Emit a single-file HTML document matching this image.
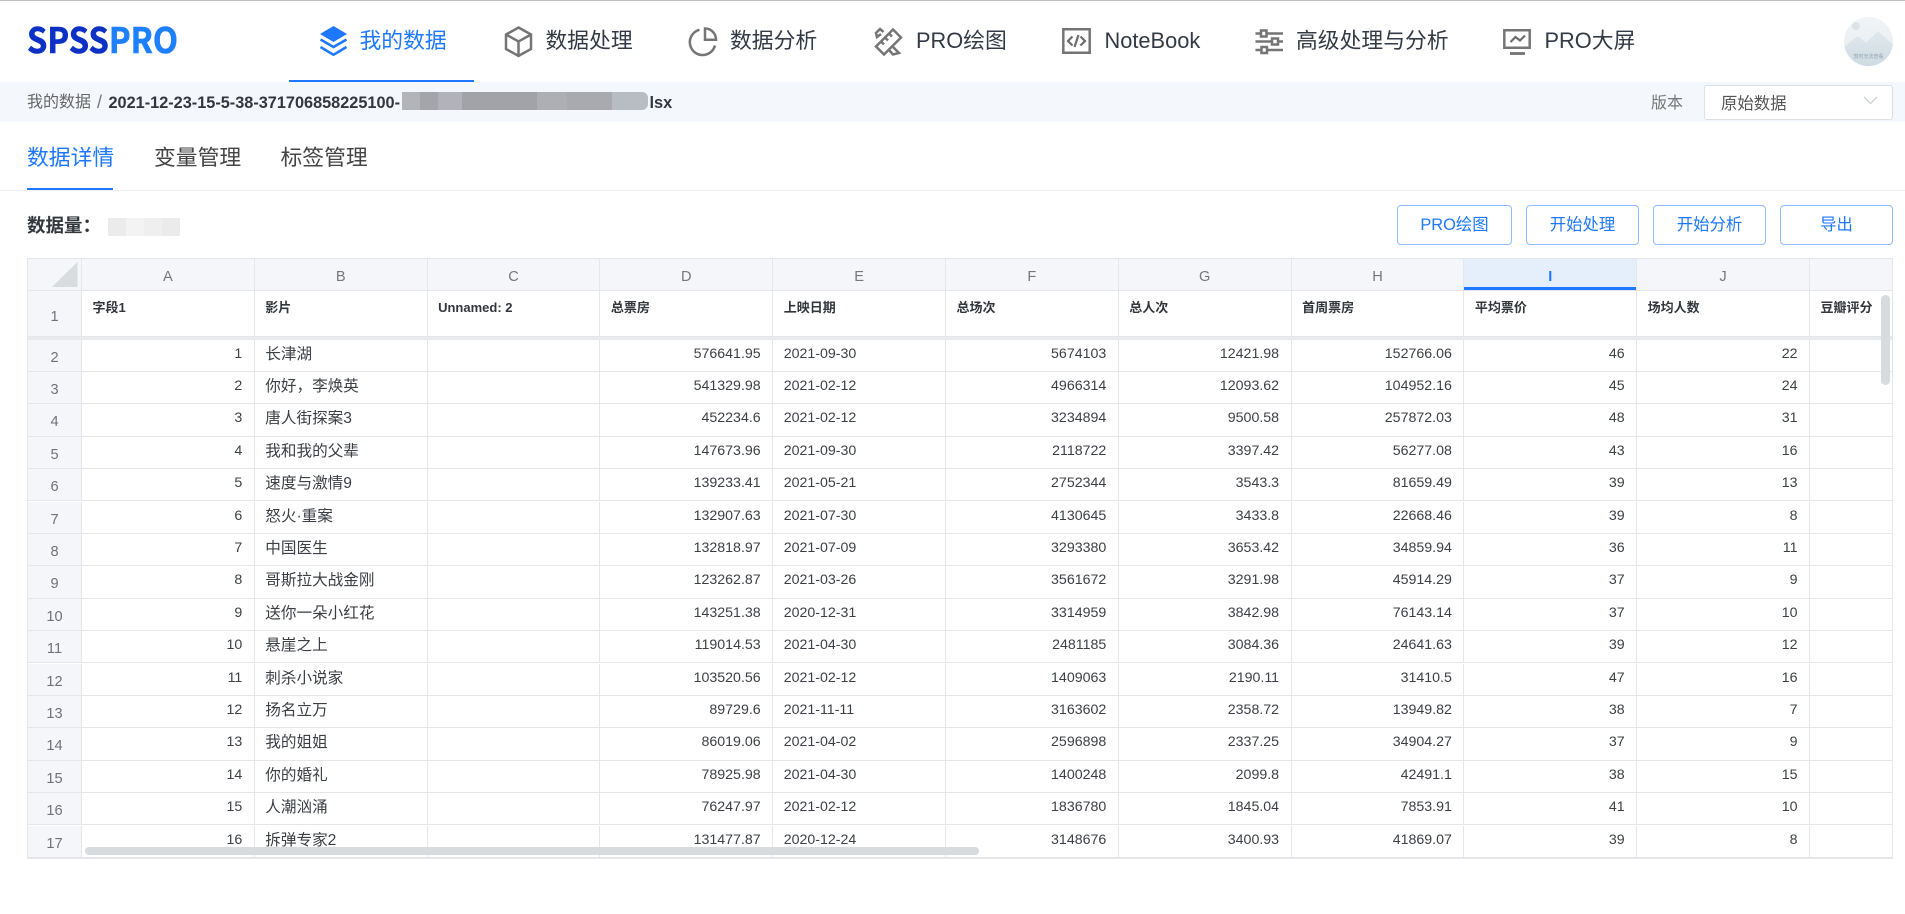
<!DOCTYPE html>
<html lang="zh-CN">
<head>
<meta charset="utf-8">
<title>SPSSPRO 数据详情</title>
<style>
html,body{margin:0;padding:0;background:#fff}
body{width:1905px;height:914px;overflow:hidden;position:relative;font-family:"Liberation Sans","Noto Sans CJK SC",sans-serif;color:#333}
.a{position:absolute;white-space:nowrap}
.nav{font-size:21.8px;line-height:30px;top:26px;color:#333a45}
svg{position:absolute;left:0;top:0;overflow:visible}
.ic{fill:none;stroke:#757575;stroke-width:2.5}
.tab{font-size:21.8px;line-height:30px;top:143px;color:#444}
.btn{position:absolute;top:205px;height:38px;line-height:39px;text-align:center;border:1px solid #8fbcff;border-radius:4px;color:#1e78ff;font-size:16.4px;box-sizing:content-box}
#grid{position:absolute;left:27px;top:258px;width:1866px;height:599px;overflow:hidden;background:#fff}
.r{position:absolute;left:0;display:flex;height:32.4px;width:1866px}
.h,.c{box-sizing:border-box;border-right:1px solid #e4e6ea;border-bottom:1px solid #e4e6ea;flex:none;white-space:nowrap;overflow:hidden}
.h{width:55px;background:#f5f6fa;color:#6f7277;text-align:center;font-size:14.6px;line-height:37px;border-left:1px solid #e4e6ea}
.c{width:172.8px;padding:0 11.5px 0 10.5px;font-size:14.2px;line-height:29.5px;color:#3c4046}
.k{width:84.2px;border-right:none}
.n{text-align:right}
.t{font-size:15.6px}
.col .h,.col .c{background:#f5f6fa;color:#777;text-align:center;line-height:37px;font-size:14.6px;padding:0}
.col .k{width:84.2px}
.hd{height:46px}
.hd .c{font-size:13px;font-weight:700;line-height:34px;color:#33373c}
.hd .h{line-height:52px}
</style>
</head>
<body>
<div class="a" style="left:0;top:0;width:1905px;height:1px;background:#bfbfbf"></div>

<!-- logo -->
<svg width="1905" height="82">
<text x="27" y="53" font-family="Noto Sans CJK SC" font-weight="700" font-size="35" textLength="151" lengthAdjust="spacingAndGlyphs" stroke-width="0.6"><tspan fill="#0c31c4" stroke="#0c31c4">SPSS</tspan><tspan fill="#1e80ff" stroke="#1e80ff">PRO</tspan></text>
<!-- layers -->
<path d="M333.5 26 347 34 333.5 42 320 34Z" fill="#1e78ff"/>
<path d="M320.5 39.5 333.5 47 346.5 39.5M320.5 47 333.5 54.8 346.5 47" fill="none" stroke="#1e78ff" stroke-width="2.5"/>
<!-- cube -->
<path class="ic" d="M518.5 27.5 531 34.5V49L518.5 56 506 49V34.5ZM506 34.5 518.5 41.5 531 34.5M518.5 41.5V56" stroke-width="2.7"/>
<!-- pie -->
<path class="ic" d="M699.5 29.8A12.8 12.8 0 1 0 715 45.5M705 28.5A11 11 0 0 1 716 39.8H705Z" stroke-width="2.6"/>
<!-- ruler/pencil -->
<path class="ic" d="M876 46.5 893 29.5 901 37.5 884 54.5ZM881 41.5 884 44.5M885 37.5 888 40.5M889 33.5 892 36.5M881 34 877 37 876 33 880 29 883.5 32M892 46 899 53 893 54.5 889 50" stroke-width="2.6"/>
<!-- notebook -->
<path class="ic" d="M1063.3 29.3H1089.7V52.7H1063.3Z" stroke-width="2.8"/>
<path d="M1072.5 36.5 1068 41l4.5 4.5M1078.5 35 1074.5 47M1080.5 36.5 1085 41 1080.5 45.5" fill="none" stroke="#6d6d6d" stroke-width="2.2"/>
<!-- sliders -->
<path class="ic" d="M1255.5 33.5H1261M1266.5 33.5H1283M1255.5 41.5H1272M1278 41.5H1283M1255.5 50H1261.5M1267 50H1283" stroke-width="2.5"/>
<path class="ic" d="M1261 30.5H1266.5V36.5H1261ZM1272 38.5H1278V44.5H1272ZM1261.5 47H1267V53H1261.5Z" stroke-width="2.2"/>
<!-- screen -->
<path class="ic" d="M1504.3 30.3H1529.7V47.7H1504.3Z" stroke-width="2.8"/>
<path d="M1510.5 42 1515.5 37 1520 40.5 1525 35.5" fill="none" stroke="#6d6d6d" stroke-width="2.2"/>
<path d="M1510 53.5H1525" stroke="#757575" stroke-width="2.8"/>
<!-- avatar -->
<defs>
<linearGradient id="av" x1="0" y1="0" x2="0" y2="1"><stop offset="0" stop-color="#f1f4f6"/><stop offset="1" stop-color="#e8edf0"/></linearGradient>
<linearGradient id="mt" x1="0" y1="0" x2="0" y2="1"><stop offset="0" stop-color="#e0e8ec"/><stop offset="1" stop-color="#cddbe2"/></linearGradient>
<clipPath id="avc"><circle cx="1868.5" cy="41.5" r="24.5"/></clipPath>
</defs>
<g clip-path="url(#avc)">
<rect x="1844" y="17" width="49" height="49" fill="url(#av)"/>
<circle cx="1856" cy="26" r="4" fill="#dbe3e8"/>
<path d="M1840 50 1858 36 1866 43 1878 31 1897 48V68H1840Z" fill="url(#mt)"/>
<text x="1868.5" y="58" font-size="5" text-anchor="middle" fill="#8ea3b0" font-family="Noto Sans CJK SC">暂时无法查看</text>
</g>
</svg>

<div class="a nav" style="left:359.5px;color:#1e78ff">我的数据</div>
<div class="a" style="left:289px;top:80px;width:185px;height:2px;background:#1e78ff"></div>
<div class="a nav" style="left:545.5px">数据处理</div>
<div class="a nav" style="left:730px">数据分析</div>
<div class="a nav" style="left:916px">PRO绘图</div>
<div class="a nav" style="left:1104.5px">NoteBook</div>
<div class="a nav" style="left:1296px">高级处理与分析</div>
<div class="a nav" style="left:1544.5px">PRO大屏</div>

<!-- breadcrumb -->
<div class="a" style="left:0;top:82px;width:1905px;height:40px;background:#f4f7fb"></div>
<div class="a" style="left:27px;top:91px;font-size:16px;line-height:24px;color:#666">我的数据</div>
<div class="a" style="left:97px;top:90px;font-size:18px;line-height:24px;color:#777">/</div>
<div class="a" style="left:108.5px;top:91px;font-size:16.3px;line-height:24px;font-weight:700;color:#33363c">2021-12-23-15-5-38-371706858225100-</div>
<div class="a" style="left:402px;top:92px;width:246px;height:18px;border-radius:0 6px 6px 0;background:linear-gradient(90deg,#b3b4ba 0 18px,#a3a5ab 18px 36px,#b2b3ba 36px 60px,#a1a3a8 60px 135px,#adafb5 135px 165px,#a8aab0 165px 210px,#b8bcc3 210px 246px)"></div>
<div class="a" style="left:649.5px;top:91px;font-size:16.4px;line-height:24px;font-weight:700;color:#33363c">lsx</div>
<div class="a" style="left:1651px;top:92px;font-size:16px;line-height:24px;color:#777">版本</div>
<div class="a" style="left:1704px;top:85px;width:187px;height:33px;background:#fff;border:1px solid #dcdfe6;border-radius:3px"></div>
<div class="a" style="left:1721px;top:92px;font-size:16.4px;line-height:24px;color:#555">原始数据</div>
<svg width="1905" height="130" style="pointer-events:none"><path d="M1864 97 1870.5 103.5 1877 97" fill="none" stroke="#c9ccd2" stroke-width="1.2"/></svg>

<!-- tabs -->
<div class="a tab" style="left:27px;color:#1e78ff">数据详情</div>
<div class="a tab" style="left:154px">变量管理</div>
<div class="a tab" style="left:280.5px">标签管理</div>
<div class="a" style="left:0;top:190px;width:1905px;height:1px;background:#edf0f3"></div>
<div class="a" style="left:27px;top:188px;width:86px;height:2px;background:#1e78ff"></div>

<!-- toolbar -->
<div class="a" style="left:27px;top:212px;font-size:18.5px;line-height:28px;font-weight:700;color:#33373c">数据量：</div>
<div class="a" style="left:108px;top:218px;width:72px;height:18px;background:linear-gradient(90deg,#ebebec 0 18px,#f3f3f3 18px 36px,#efefef 36px 54px,#ebebec 54px 72px)"></div>
<div class="btn" style="left:1397px;width:113px">PRO绘图</div>
<div class="btn" style="left:1526px;width:111px">开始处理</div>
<div class="btn" style="left:1653px;width:111px">开始分析</div>
<div class="btn" style="left:1780px;width:111px">导出</div>

<!-- grid -->
<div id="grid">
<div class="r col" style="top:0;height:33px;border-top:1px solid #e4e6ea;box-sizing:border-box"><div class="h" style="height:32px"></div><div class="c">A</div><div class="c">B</div><div class="c">C</div><div class="c">D</div><div class="c">E</div><div class="c">F</div><div class="c">G</div><div class="c">H</div><div class="c" style="background:#e5effc;color:#1e78ff;font-weight:700;box-shadow:inset 0 -3px 0 #1e78ff">I</div><div class="c">J</div><div class="c k"></div></div>

<div class="r hd" style="top:33px"><div class="h" style="height:46px">1</div><div class="c">字段1</div><div class="c">影片</div><div class="c">Unnamed: 2</div><div class="c">总票房</div><div class="c">上映日期</div><div class="c">总场次</div><div class="c">总人次</div><div class="c">首周票房</div><div class="c">平均票价</div><div class="c">场均人数</div><div class="c k">豆瓣评分</div></div>
<div style="position:absolute;left:0;top:78.5px;width:1866px;height:3px;background:#e8eaec"></div>

<div class="r" style="top:81.5px"><div class="h">2</div><div class="c n">1</div><div class="c t">长津湖</div><div class="c"></div><div class="c n">576641.95</div><div class="c">2021-09-30</div><div class="c n">5674103</div><div class="c n">12421.98</div><div class="c n">152766.06</div><div class="c n">46</div><div class="c n">22</div><div class="c k"></div></div>
<div class="r" style="top:113.9px"><div class="h">3</div><div class="c n">2</div><div class="c t">你好，李焕英</div><div class="c"></div><div class="c n">541329.98</div><div class="c">2021-02-12</div><div class="c n">4966314</div><div class="c n">12093.62</div><div class="c n">104952.16</div><div class="c n">45</div><div class="c n">24</div><div class="c k"></div></div>
<div class="r" style="top:146.3px"><div class="h">4</div><div class="c n">3</div><div class="c t">唐人街探案3</div><div class="c"></div><div class="c n">452234.6</div><div class="c">2021-02-12</div><div class="c n">3234894</div><div class="c n">9500.58</div><div class="c n">257872.03</div><div class="c n">48</div><div class="c n">31</div><div class="c k"></div></div>
<div class="r" style="top:178.7px"><div class="h">5</div><div class="c n">4</div><div class="c t">我和我的父辈</div><div class="c"></div><div class="c n">147673.96</div><div class="c">2021-09-30</div><div class="c n">2118722</div><div class="c n">3397.42</div><div class="c n">56277.08</div><div class="c n">43</div><div class="c n">16</div><div class="c k"></div></div>
<div class="r" style="top:211.1px"><div class="h">6</div><div class="c n">5</div><div class="c t">速度与激情9</div><div class="c"></div><div class="c n">139233.41</div><div class="c">2021-05-21</div><div class="c n">2752344</div><div class="c n">3543.3</div><div class="c n">81659.49</div><div class="c n">39</div><div class="c n">13</div><div class="c k"></div></div>
<div class="r" style="top:243.5px"><div class="h">7</div><div class="c n">6</div><div class="c t">怒火·重案</div><div class="c"></div><div class="c n">132907.63</div><div class="c">2021-07-30</div><div class="c n">4130645</div><div class="c n">3433.8</div><div class="c n">22668.46</div><div class="c n">39</div><div class="c n">8</div><div class="c k"></div></div>
<div class="r" style="top:275.9px"><div class="h">8</div><div class="c n">7</div><div class="c t">中国医生</div><div class="c"></div><div class="c n">132818.97</div><div class="c">2021-07-09</div><div class="c n">3293380</div><div class="c n">3653.42</div><div class="c n">34859.94</div><div class="c n">36</div><div class="c n">11</div><div class="c k"></div></div>
<div class="r" style="top:308.3px"><div class="h">9</div><div class="c n">8</div><div class="c t">哥斯拉大战金刚</div><div class="c"></div><div class="c n">123262.87</div><div class="c">2021-03-26</div><div class="c n">3561672</div><div class="c n">3291.98</div><div class="c n">45914.29</div><div class="c n">37</div><div class="c n">9</div><div class="c k"></div></div>
<div class="r" style="top:340.7px"><div class="h">10</div><div class="c n">9</div><div class="c t">送你一朵小红花</div><div class="c"></div><div class="c n">143251.38</div><div class="c">2020-12-31</div><div class="c n">3314959</div><div class="c n">3842.98</div><div class="c n">76143.14</div><div class="c n">37</div><div class="c n">10</div><div class="c k"></div></div>
<div class="r" style="top:373.1px"><div class="h">11</div><div class="c n">10</div><div class="c t">悬崖之上</div><div class="c"></div><div class="c n">119014.53</div><div class="c">2021-04-30</div><div class="c n">2481185</div><div class="c n">3084.36</div><div class="c n">24641.63</div><div class="c n">39</div><div class="c n">12</div><div class="c k"></div></div>
<div class="r" style="top:405.5px"><div class="h">12</div><div class="c n">11</div><div class="c t">刺杀小说家</div><div class="c"></div><div class="c n">103520.56</div><div class="c">2021-02-12</div><div class="c n">1409063</div><div class="c n">2190.11</div><div class="c n">31410.5</div><div class="c n">47</div><div class="c n">16</div><div class="c k"></div></div>
<div class="r" style="top:437.9px"><div class="h">13</div><div class="c n">12</div><div class="c t">扬名立万</div><div class="c"></div><div class="c n">89729.6</div><div class="c">2021-11-11</div><div class="c n">3163602</div><div class="c n">2358.72</div><div class="c n">13949.82</div><div class="c n">38</div><div class="c n">7</div><div class="c k"></div></div>
<div class="r" style="top:470.3px"><div class="h">14</div><div class="c n">13</div><div class="c t">我的姐姐</div><div class="c"></div><div class="c n">86019.06</div><div class="c">2021-04-02</div><div class="c n">2596898</div><div class="c n">2337.25</div><div class="c n">34904.27</div><div class="c n">37</div><div class="c n">9</div><div class="c k"></div></div>
<div class="r" style="top:502.7px"><div class="h">15</div><div class="c n">14</div><div class="c t">你的婚礼</div><div class="c"></div><div class="c n">78925.98</div><div class="c">2021-04-30</div><div class="c n">1400248</div><div class="c n">2099.8</div><div class="c n">42491.1</div><div class="c n">38</div><div class="c n">15</div><div class="c k"></div></div>
<div class="r" style="top:535.1px"><div class="h">16</div><div class="c n">15</div><div class="c t">人潮汹涌</div><div class="c"></div><div class="c n">76247.97</div><div class="c">2021-02-12</div><div class="c n">1836780</div><div class="c n">1845.04</div><div class="c n">7853.91</div><div class="c n">41</div><div class="c n">10</div><div class="c k"></div></div>
<div class="r" style="top:567.5px"><div class="h" style="border-bottom:none">17</div><div class="c n" style="border-bottom:none">16</div><div class="c t" style="border-bottom:none">拆弹专家2</div><div class="c" style="border-bottom:none"></div><div class="c n" style="border-bottom:none">131477.87</div><div class="c" style="border-bottom:none">2020-12-24</div><div class="c n" style="border-bottom:none">3148676</div><div class="c n" style="border-bottom:none">3400.93</div><div class="c n" style="border-bottom:none">41869.07</div><div class="c n" style="border-bottom:none">39</div><div class="c n" style="border-bottom:none">8</div><div class="c k" style="border-bottom:none"></div></div>
</div>
<!-- grid outer border and corner -->
<div class="a" style="left:27px;top:258px;width:1864px;height:598px;border:1px solid #e4e6ea;border-bottom-width:2px;pointer-events:none"></div>
<svg width="1905" height="914" style="pointer-events:none"><path d="M52 287 77.5 262V287Z" fill="#d9dcdf"/></svg>
<!-- scrollbars -->
<div class="a" style="left:85px;top:846.5px;width:894px;height:8px;border-radius:5px;background:#d8dbde"></div>
<div class="a" style="left:1880.5px;top:295px;width:9px;height:90px;border-radius:5px;background:#d8dbde"></div>
</body>
</html>
